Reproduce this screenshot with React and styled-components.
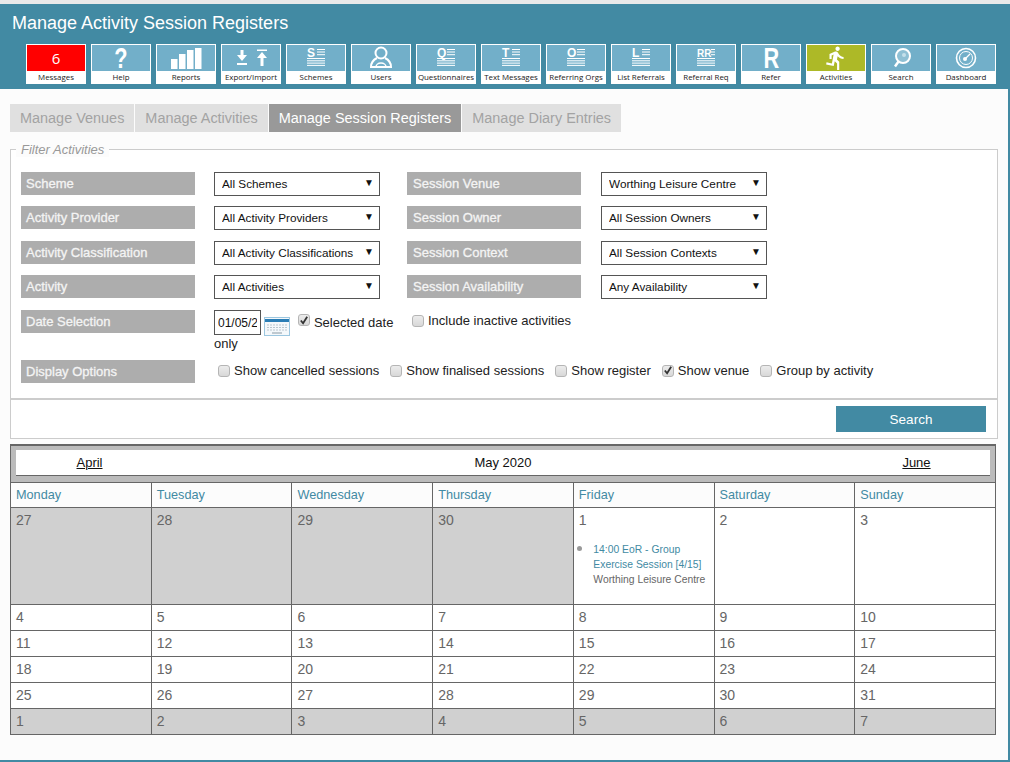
import React from "react";
import styled, { createGlobalStyle } from "styled-components";
import { MdDirectionsRun } from "react-icons/md";

const TEAL = "#428aa3";

const GlobalStyle = createGlobalStyle`
    html, body {
        margin: 0;
        padding: 0;
        background: #e9e9e9;
        font-family: "Liberation Sans", Arial, sans-serif;
    }
`;

function LetterIcon({ letter }) {
    const wide = letter.length > 1;
    return (
        <svg width="30" height="26" viewBox="0 0 30 26">
            <text x="6" y="11.500" fontSize={wide ? 10 : 12} fontWeight="700" fill="#fff" fontFamily="Liberation Sans">{letter}</text>
            <g stroke="#fff" strokeWidth="1">
                <path d={wide ? "M20 4.500h4M20 7h4M20 9.700h4" : "M16 4.500h8M16 7h8M16 9.700h8"} />
                <path d="M6 13.500h18M6 15.800h18M6 18.100h18M6 20.400h18" />
            </g>
        </svg>
    );
}

const ReportsIcon = () => (
    <svg width="34" height="26" viewBox="0 0 34 26" fill="#fff">
        <rect x="2" y="14" width="6.500" height="10" />
        <rect x="10" y="9" width="6.500" height="15" />
        <rect x="18" y="5" width="6.500" height="19" />
        <rect x="26" y="3" width="6.500" height="21" />
    </svg>
);

const TransferIcon = () => (
    <svg width="36" height="26" viewBox="0 0 36 26" fill="#fff">
        <path d="M7.500 5h3v5h3.500l-5 6-5-6h3.500z" />
        <rect x="4" y="18" width="10" height="2" />
        <rect x="24" y="4.500" width="10" height="1.500" />
        <path d="M29 7l5 6h-3.500v8h-3v-8h-3.500z" />
    </svg>
);

const UserIcon = () => (
    <svg width="24" height="26" viewBox="0 0 24 26" fill="none" stroke="#fff" strokeWidth="2">
        <circle cx="12" cy="8" r="5.500" />
        <path d="M8 13c-4 2-6 4-6 9h20c0-5-2-7-6-9" />
        <path d="M7 22c0-2 2-4 5-4s5 2 5 4" strokeWidth="1.500" />
    </svg>
);

const LensIcon = () => (
    <svg width="26" height="26" viewBox="0 0 26 26" fill="none" stroke="#fff">
        <circle cx="15" cy="11" r="7" strokeWidth="2" fill="#8fc0d4" />
        <circle cx="16" cy="10" r="2" stroke="none" fill="#c5e0ea" />
        <path d="M10.500 16.500L7 21.500" strokeWidth="2.500" />
    </svg>
);

const GaugeIcon = () => (
    <svg width="26" height="26" viewBox="0 0 26 26" fill="none" stroke="#fff">
        <circle cx="13" cy="13" r="9.500" strokeWidth="1.600" />
        <circle cx="13" cy="13" r="6.500" strokeWidth="1" />
        <circle cx="12" cy="14" r="2" fill="#fff" stroke="none" />
        <path d="M12 14l5-5" strokeWidth="1.200" />
    </svg>
);

const CalendarIcon = () => (
    <CalendarSvg width="26" height="19" viewBox="0 0 26 19">
        <rect x="0.500" y="0.500" width="25" height="18" fill="#f4f8fb" stroke="#9cc7e0" />
        <rect x="1" y="2" width="24" height="3" fill="#2a7db5" />
        <path d="M3 8h20M3 10.500h20M3 13h20" stroke="#b9c6cf" strokeDasharray="2 1" />
        <path d="M8 16h10" stroke="#8a9aa5" />
    </CalendarSvg>
);

const navItems = [
    { label: "Messages", count: 6, tone: "#ff0000" },
    { label: "Help", glyph: "?" },
    { label: "Reports", icon: <ReportsIcon /> },
    { label: "Export/Import", icon: <TransferIcon /> },
    { label: "Schemes", icon: <LetterIcon letter="S" /> },
    { label: "Users", icon: <UserIcon /> },
    { label: "Questionnaires", icon: <LetterIcon letter="Q" /> },
    { label: "Text Messages", icon: <LetterIcon letter="T" /> },
    { label: "Referring Orgs", icon: <LetterIcon letter="O" /> },
    { label: "List Referrals", icon: <LetterIcon letter="L" /> },
    { label: "Referral Req", icon: <LetterIcon letter="RR" /> },
    { label: "Refer", glyph: "R" },
    { label: "Activities", icon: <MdDirectionsRun size={26} color="#fff" />, tone: "#adb927" },
    { label: "Search", icon: <LensIcon /> },
    { label: "Dashboard", icon: <GaugeIcon /> },
];

const tabs = ["Manage Venues", "Manage Activities", "Manage Session Registers", "Manage Diary Entries"];

const filterRows = [
    ["Scheme", "All Schemes", "Session Venue", "Worthing Leisure Centre"],
    ["Activity Provider", "All Activity Providers", "Session Owner", "All Session Owners"],
    ["Activity Classification", "All Activity Classifications", "Session Context", "All Session Contexts"],
    ["Activity", "All Activities", "Session Availability", "Any Availability"],
];

const displayOptions = [
    { label: "Show cancelled sessions" },
    { label: "Show finalised sessions" },
    { label: "Show register" },
    { label: "Show venue", checked: true },
    { label: "Group by activity" },
];

const weekDays = ["Monday", "Tuesday", "Wednesday", "Thursday", "Friday", "Saturday", "Sunday"];

const calendarDays = [
    ...[27, 28, 29, 30].map((day) => ({ day, muted: true })),
    ...Array.from({ length: 31 }, (_, i) => ({ day: i + 1 })),
    ...[1, 2, 3, 4, 5, 6, 7].map((day) => ({ day, muted: true })),
];

const Tick = () => (
    <svg width="11" height="11" viewBox="0 0 11 11">
        <path d="M2 5.500l2.500 3L9 1.500" fill="none" stroke="#333" strokeWidth="2" />
    </svg>
);

function Dropdown({ value }) {
    return (
        <SelectWrap>
            <Select defaultValue={value}>
                <option>{value}</option>
            </Select>
            <Arrow>▼</Arrow>
        </SelectWrap>
    );
}

function Check({ label, checked }) {
    return (
        <CheckLabel>
            <CheckBox>{checked && <Tick />}</CheckBox>
            {label}
        </CheckLabel>
    );
}

function App() {
    return (
        <Page>
            <GlobalStyle />
            <Header>
                <Title>Manage Activity Session Registers</Title>
                <Nav>
                    {navItems.map((item) => (
                        <Tile key={item.label}>
                            <TileIcon $tone={item.tone}>
                                {item.count && <Count>{item.count}</Count>}
                                {item.glyph && <Glyph>{item.glyph}</Glyph>}
                                {item.icon}
                            </TileIcon>
                            <TileLabel>{item.label}</TileLabel>
                        </Tile>
                    ))}
                </Nav>
            </Header>

            <Content>
                <Tabs>
                    {tabs.map((tab, i) => (
                        <Tab key={tab} $active={i === 2}>{tab}</Tab>
                    ))}
                </Tabs>

                <Filter>
                    <Legend>Filter Activities</Legend>
                    <FilterGrid>
                        {filterRows.map(([label, value, label2, value2]) => (
                            <React.Fragment key={label}>
                                <FieldLabel>{label}</FieldLabel>
                                <Dropdown value={value} />
                                <FieldLabel $second>{label2}</FieldLabel>
                                <Dropdown value={value2} />
                            </React.Fragment>
                        ))}
                        <FieldLabel>Date Selection</FieldLabel>
                        <DateCell>
                            <DateInput type="text" defaultValue="01/05/2020" readOnly />{" "}
                            <CalendarIcon />{" "}
                            <CheckBox $inline><Tick /></CheckBox>{" "}
                            Selected date only
                        </DateCell>
                        <InactiveCell>
                            <Check label="Include inactive activities" />
                        </InactiveCell>
                        <FieldLabel>Display Options</FieldLabel>
                        <OptionsCell>
                            {displayOptions.map((option) => (
                                <Check key={option.label} label={option.label} checked={option.checked} />
                            ))}
                        </OptionsCell>
                    </FilterGrid>
                </Filter>

                <SearchBar>
                    <SearchButton>Search</SearchButton>
                </SearchBar>

                <Calendar>
                    <MonthBar>
                        <MonthLink href="#">April</MonthLink>
                        <MonthName>May 2020</MonthName>
                        <MonthLink href="#">June</MonthLink>
                    </MonthBar>
                    <DayGrid>
                        {weekDays.map((day) => (
                            <WeekDay key={day}>{day}</WeekDay>
                        ))}
                        {calendarDays.map(({ day, muted }, i) => (
                            <Day key={i} $muted={muted}>
                                {day}
                                {i === 4 && (
                                    <Sessions>
                                        <Session>
                                            <SessionLink>14:00 EoR - Group Exercise Session [4/15]</SessionLink>
                                            <br />
                                            Worthing Leisure Centre
                                        </Session>
                                    </Sessions>
                                )}
                            </Day>
                        ))}
                    </DayGrid>
                </Calendar>
            </Content>
        </Page>
    );
}

const Page = styled.div`
    width: 1010px;
    height: 762px;
    padding-top: 4px;
    box-sizing: border-box;
    display: flex;
    flex-direction: column;
    overflow: hidden;
`;

const Header = styled.header`
    height: 85px;
    flex-shrink: 0;
    box-sizing: border-box;
    padding: 9px 0 0 12px;
    background: ${TEAL};
`;

const Title = styled.h1`
    margin: 0;
    color: #fff;
    font-size: 18px;
    font-weight: 400;
    line-height: 21px;
`;

const Nav = styled.nav`
    display: flex;
    gap: 5px;
    margin: 10px 0 0 14px;
`;

const Tile = styled.div`
    width: 60px;
    height: 40px;
    box-sizing: border-box;
    border: 1px solid #fff;
    background: #fff;
    display: flex;
    flex-direction: column;
`;

const TileIcon = styled.div`
    height: 26px;
    flex-shrink: 0;
    display: flex;
    align-items: center;
    justify-content: center;
    background: ${({ $tone }) => $tone || "#72afc9"};
`;

const Count = styled.span`
    color: #fff;
    font-size: 15px;
    font-family: "Open Sans", sans-serif;
`;

const Glyph = styled.span`
    color: #fff;
    font-size: 29px;
    font-weight: 700;
    line-height: 26px;
    transform: scaleX(0.75);
`;

const TileLabel = styled.div`
    flex: 1;
    color: #222;
    font-family: "Open Sans", sans-serif;
    font-size: 7.900px;
    line-height: 12px;
    text-align: center;
    white-space: nowrap;
`;

const Content = styled.main`
    flex: 1;
    box-sizing: border-box;
    padding: 15px 10px 0;
    background: #fcfcfc;
    border-right: 2px solid ${TEAL};
    border-bottom: 2px solid ${TEAL};
`;

const Tabs = styled.div`
    display: flex;
    gap: 1px;
`;

const Tab = styled.div`
    height: 28px;
    padding: 0 10px;
    color: ${({ $active }) => ($active ? "#fff" : "#a3a3a3")};
    background: ${({ $active }) => ($active ? "#999" : "#e0e0e0")};
    font-size: 14.450px;
    line-height: 28px;
`;

const Filter = styled.fieldset`
    margin: 10px 0 0;
    padding: 15px 10px 0;
    min-width: 0;
    height: 258px;
    box-sizing: border-box;
    border: 1px solid #ccc;
    border-bottom-width: 2px;
    background: #fff;
`;

const Legend = styled.legend`
    padding: 0 5px;
    margin-left: -5px;
    color: #999;
    font-size: 13px;
    font-style: italic;
    background: #fcfcfc;
`;

const FilterGrid = styled.div`
    display: grid;
    grid-template-columns: 193px 193px 194px 166px;
    grid-template-rows: 34px 35px 34px 35px 50px 30px;
    color: #222;
    font-size: 13px;
`;

const FieldLabel = styled.div`
    width: 174px;
    height: 23px;
    box-sizing: border-box;
    padding-left: ${({ $second }) => ($second ? "6px" : "5px")};
    color: #f4f4f4;
    background: #adadad;
    font-size: 13px;
    line-height: 23px;
    -webkit-text-stroke: 0.3px #f4f4f4;
`;

const SelectWrap = styled.div`
    position: relative;
    width: 166px;
    height: 24px;
`;

const Select = styled.select`
    width: 100%;
    height: 24px;
    box-sizing: border-box;
    padding: 0 0 1px 7px;
    border: 1px solid #555;
    border-radius: 0;
    background: #fff;
    color: #111;
    font-family: "Liberation Sans", sans-serif;
    font-size: 11.750px;
    appearance: none;
`;

const Arrow = styled.span`
    position: absolute;
    top: 5px;
    right: 6px;
    font-size: 10px;
    line-height: 12px;
    color: #111;
    pointer-events: none;
`;

const DateCell = styled.div`
    width: 190px;
    line-height: 15px;
`;

const CalendarSvg = styled.svg`
    margin-left: -1px;
    vertical-align: -9px;
`;

const DateInput = styled.input`
    width: 47px;
    height: 25px;
    box-sizing: border-box;
    padding: 0 3px;
    border: 1px solid #555;
    color: #111;
    font-family: "Liberation Sans", sans-serif;
    font-size: 12px;
`;

const InactiveCell = styled.div`
    grid-column: 3 / 5;
    padding: 2px 0 0 5px;
`;

const OptionsCell = styled.div`
    grid-column: 2 / 5;
    display: flex;
    gap: 11px;
    padding: 2px 0 0 4px;
`;

const CheckLabel = styled.label`
    display: flex;
    align-items: center;
    height: 17px;
    gap: 4px;
    white-space: nowrap;
`;

const CheckBox = styled.span`
    display: inline-flex;
    align-items: center;
    justify-content: center;
    width: 12px;
    height: 12px;
    box-sizing: border-box;
    margin-left: ${({ $inline }) => ($inline ? "5px" : "0")};
    border: 1px solid #b5b5b5;
    border-radius: 3px;
    background: linear-gradient(#ececec, #d8d8d8);
    vertical-align: ${({ $inline }) => ($inline ? "1px" : "baseline")};
`;

const SearchBar = styled.div`
    height: 39px;
    box-sizing: border-box;
    padding: 6px 11px 0 0;
    display: flex;
    justify-content: flex-end;
    background: #fff;
    border: 1px solid #ccc;
    border-top: 0;
`;

const SearchButton = styled.button`
    width: 150px;
    height: 26px;
    padding: 0;
    border: 0;
    color: #fff;
    background: ${TEAL};
    font-family: "Liberation Sans", sans-serif;
    font-size: 13.500px;
`;

const Calendar = styled.section`
    width: 986px;
    margin-top: 5px;
    box-sizing: border-box;
    border: 1px solid #666;
    border-top-width: 2px;
    background: #bbb;
`;

const MonthBar = styled.div`
    height: 25px;
    margin: 4px 5px 6px;
    display: grid;
    grid-template-columns: 147px 1fr 147px;
    align-items: center;
    text-align: center;
    font-size: 13px;
    background: #fff;
    border-bottom: 1px solid #666;
`;

const MonthLink = styled.a`
    color: #111;
`;

const MonthName = styled.span`
    color: #111;
`;

const DayGrid = styled.div`
    display: grid;
    grid-template-columns: repeat(7, 1fr);
    grid-template-rows: 24px 96px repeat(5, 25px);
    gap: 1px;
    background: #666;
    border-top: 1px solid #666;
`;

const WeekDay = styled.div`
    padding-left: 5px;
    color: ${TEAL};
    background: #fcfcfc;
    font-size: 12.700px;
    line-height: 24px;
`;

const Day = styled.div`
    padding-left: 5px;
    color: #666;
    background: ${({ $muted }) => ($muted ? "#d0d0d0" : "#fff")};
    font-size: 14px;
    line-height: 25px;
`;

const Sessions = styled.ul`
    margin: 7px 0 0;
    padding: 0 0 0 14.500px;
    font-size: 10.350px;
    line-height: 15px;
    color: #666;
`;

const Session = styled.li`
    &::marker {
        color: #999;
        font-size: 15px;
    }
`;

const SessionLink = styled.span`
    color: ${TEAL};
`;

export default App;
